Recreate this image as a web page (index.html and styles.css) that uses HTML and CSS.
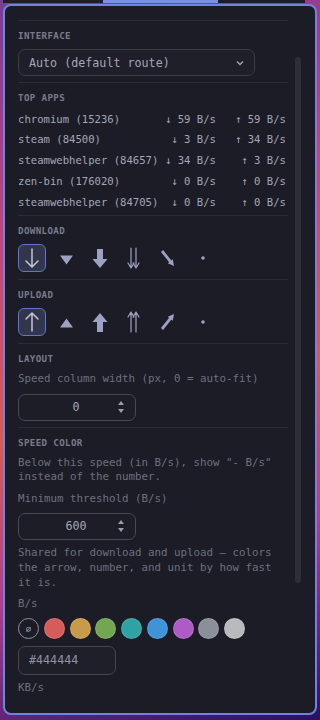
FILE: index.html
```html
<!DOCTYPE html>
<html lang="en">

<head>
	<meta charset="UTF-8">
	<meta name="viewport" content="width=device-width, initial-scale=1.0">
	<title>Net Speed Settings</title>
	<link rel="stylesheet" href="styles.css">
</head>

<body>
	<div class="topbar">
		<span class="tb-edge"></span>
		<span class="tb-dark tb-left"></span>
		<span class="tb-active"></span>
		<span class="tb-dark tb-right"></span>
	</div>

	<div class="panel">
		<div class="content">
			<div class="divider"></div>
			<section class="section">
				<h2 class="section-title">Interface</h2>
				<div class="select">
					<span>Auto (default route)</span>
					<svg class="chevron" viewBox="0 0 10 6"><path d="M2 1.5 L5 4.5 L8 1.5" /></svg>
				</div>
			</section>

			<div class="divider"></div>
			<section class="section section-apps">
				<h2 class="section-title">Top apps</h2>
				<div class="app-list">
					<span>chromium (15236)</span><span class="rate">↓ 59 B/s</span><span class="rate">↑ 59 B/s</span>
					<span>steam (84500)</span><span class="rate">↓ 3 B/s</span><span class="rate">↑ 34 B/s</span>
					<span>steamwebhelper (84657)</span><span class="rate">↓ 34 B/s</span><span class="rate">↑ 3 B/s</span>
					<span>zen-bin (176020)</span><span class="rate">↓ 0 B/s</span><span class="rate">↑ 0 B/s</span>
					<span>steamwebhelper (84705)</span><span class="rate">↓ 0 B/s</span><span class="rate">↑ 0 B/s</span>
				</div>
			</section>

			<div class="divider"></div>
			<section class="section section-icons">
				<h2 class="section-title">Download</h2>
				<div class="icon-row">
					<button class="icon-btn active"><svg viewBox="0 0 28 28"><path class="line" d="M14 5 V23 M8 17 L14 23 L20 17" /></svg></button>
					<button class="icon-btn"><svg viewBox="0 0 28 28"><polygon class="fill" points="8,11.5 21,11.5 14.5,20.5" /></svg></button>
					<button class="icon-btn"><svg viewBox="0 0 28 28"><path class="fill" d="M12 5 H18 V15 H22.5 L15 24 L7.5 15 H12 Z" /></svg></button>
					<button class="icon-btn"><svg viewBox="0 0 28 28"><path class="line thin" d="M12 4 V24 M17 4 V24 M9 19 L12 24 L15 19 M14 19 L17 24 L20 19" /></svg></button>
					<button class="icon-btn"><svg viewBox="0 0 28 28"><path class="line bold" d="M10 7 L18.5 17.6" /><polygon class="fill" points="22,22 15.75,19.3 20.75,15.3" /></svg></button>
					<button class="icon-btn"><svg viewBox="0 0 28 28"><circle class="fill" cx="17" cy="14" r="1.8" /></svg></button>
				</div>
			</section>

			<div class="divider"></div>
			<section class="section section-icons">
				<h2 class="section-title">Upload</h2>
				<div class="icon-row">
					<button class="icon-btn active"><svg viewBox="0 0 28 28"><path class="line" d="M14 23 V5 M8 11 L14 5 L20 11" /></svg></button>
					<button class="icon-btn"><svg viewBox="0 0 28 28"><polygon class="fill" points="8,19.5 21,19.5 14.5,10.5" /></svg></button>
					<button class="icon-btn"><svg viewBox="0 0 28 28"><path class="fill" d="M12 24 H18 V14 H22.5 L15 5 L7.5 14 H12 Z" /></svg></button>
					<button class="icon-btn"><svg viewBox="0 0 28 28"><path class="line thin" d="M12 24 V4 M17 24 V4 M9 9 L12 4 L15 9 M14 9 L17 4 L20 9" /></svg></button>
					<button class="icon-btn"><svg viewBox="0 0 28 28"><path class="line bold" d="M10 21 L18.5 10.4" /><polygon class="fill" points="22,6 15.75,8.7 20.75,12.7" /></svg></button>
					<button class="icon-btn"><svg viewBox="0 0 28 28"><circle class="fill" cx="17" cy="14" r="1.8" /></svg></button>
				</div>
			</section>

			<div class="divider"></div>
			<section class="section">
				<h2 class="section-title">Layout</h2>
				<p class="hint">Speed column width (px, 0 = auto-fit)</p>
				<div class="number-input">
					<span class="value">0</span>
					<span class="spinner"><svg viewBox="0 0 8 16"><polygon points="1,6 7,6 4,2" /><polygon points="1,10 7,10 4,14" /></svg></span>
				</div>
			</section>

			<div class="divider"></div>
			<section class="section">
				<h2 class="section-title">Speed color</h2>
				<p class="hint">Below this speed (in B/s), show "- B/s" instead of the number.</p>
				<p class="hint">Minimum threshold (B/s)</p>
				<div class="number-input">
					<span class="value">600</span>
					<span class="spinner"><svg viewBox="0 0 8 16"><polygon points="1,6 7,6 4,2" /><polygon points="1,10 7,10 4,14" /></svg></span>
				</div>
				<p class="hint">Shared for download and upload — colors the arrow, number, and unit by how fast it is.</p>
				<p class="hint">B/s</p>
				<div class="swatches">
					<span class="swatch none">⌀</span>
					<span class="swatch red"></span>
					<span class="swatch orange"></span>
					<span class="swatch green"></span>
					<span class="swatch teal"></span>
					<span class="swatch blue"></span>
					<span class="swatch purple"></span>
					<span class="swatch grey"></span>
					<span class="swatch silver"></span>
				</div>
				<div class="hex-input">#444444</div>
				<p class="hint">KB/s</p>
			</section>
		</div>

		<div class="scroll-gutter">
			<div class="scroll-thumb"></div>
		</div>
	</div>
</body>

</html>
```

FILE: styles.css
```css
* {
	margin: 0;
	padding: 0;
	box-sizing: border-box;
}

body {
	width: 320px;
	height: 720px;
	overflow: hidden;
	font-family: 'DejaVu Sans Mono', 'Liberation Mono', monospace;
	font-size: 10.8px;
	color: #a4a7b8;
	background: linear-gradient(165deg, #7b3a9a 0%, #c8437a 30%, #e0584f 55%, #b53c8c 75%, #3a1a70 96%, #2a1260 100%);
}

.topbar {
	display: flex;
	height: 3px;
}

.tb-edge {
	width: 3px;
}

.tb-dark {
	background: #1e1e29;
}

.tb-left {
	width: 100px;
}

.tb-active {
	width: 115px;
	background: #7b8fe3;
}

.tb-right {
	width: 87px;
}

.panel {
	display: flex;
	margin: 1px 3px 0;
	height: 711px;
	background: #1b1c25;
	border: 2px solid #6f84dc;
	border-radius: 8px;
	overflow: hidden;
}

.content {
	flex: 1;
	min-width: 0;
	padding: 14px 2px 0 13px;
}

.divider {
	height: 1px;
	margin-right: -2px;
	background: #292b36;
}

.section {
	display: flex;
	flex-direction: column;
	gap: 6.5px;
	padding: 8px 0 6px;
}

.section-title {
	font-size: 9.2px;
	line-height: 13px;
	font-weight: 700;
	letter-spacing: 0.35px;
	color: #787b8b;
	text-transform: uppercase;
	margin-bottom: 0.5px;
}

.select {
	display: flex;
	align-items: center;
	justify-content: space-between;
	width: 237px;
	height: 27px;
	padding: 0 9px 0 10px;
	border: 1px solid #3a3c49;
	border-radius: 7px;
	background: #1e1f29;
	font-size: 11.7px;
	color: #a4a7b8;
}

.chevron {
	width: 10px;
	height: 6px;
	fill: none;
	stroke: #a4a7b8;
	stroke-width: 1.3;
}

.section-apps {
	gap: 4px;
	padding-bottom: 3px;
}

.app-list {
	display: grid;
	grid-template-columns: 1fr auto 66px;
	column-gap: 4px;
	font-size: 10.6px;
	line-height: 20.75px;
	white-space: nowrap;
}

.rate {
	text-align: right;
	color: #a4a7b8;
}

.section-icons {
	padding-bottom: 7px;
}

.icon-row {
	display: flex;
	gap: 5.5px;
}

.icon-btn {
	width: 28px;
	height: 28px;
	border: 1.5px solid transparent;
	border-radius: 6px;
	background: transparent;
	display: flex;
	align-items: center;
	justify-content: center;
}

.icon-btn svg {
	width: 28px;
	height: 28px;
	flex: none;
}

.icon-btn .line {
	fill: none;
	stroke: #9da1c2;
	stroke-width: 1.5;
	stroke-linecap: round;
	stroke-linejoin: round;
}

.icon-btn .line.thin {
	stroke-width: 1.2;
}

.icon-btn .line.bold {
	stroke-width: 2.8;
	stroke-linecap: butt;
}

.icon-btn .fill {
	fill: #9da1c2;
}

.icon-btn.active {
	border-color: #5b79cc;
	background: #33364a;
}

.icon-btn.active .line {
	stroke: #c3c6da;
}

.hint {
	line-height: 14.75px;
	color: #6d707f;
}

.number-input {
	display: flex;
	align-items: center;
	width: 118px;
	height: 27px;
	border: 1px solid #474955;
	border-radius: 7px;
	background: #1c1d26;
	font-size: 11.7px;
	color: #a4a7b8;
}

.number-input .value {
	flex: 1;
	text-align: center;
	padding-left: 16px;
}

.spinner {
	width: 18px;
	display: flex;
	align-items: center;
}

.spinner svg {
	width: 8px;
	height: 16px;
	fill: #9a9dad;
}

.swatches {
	display: flex;
	gap: 4.75px;
}

.swatch {
	width: 21px;
	height: 21px;
	border-radius: 50%;
	border: 1px solid rgba(255, 255, 255, 0.12);
}

.swatch.none {
	display: flex;
	align-items: center;
	justify-content: center;
	border-color: #8e91a0;
	font-size: 9px;
	color: #a4a7b8;
}

.red { background: #d65c5c; }
.orange { background: #c99a4a; }
.green { background: #72a650; }
.teal { background: #2fa3a3; }
.blue { background: #3f93d9; }
.purple { background: #ad5cc6; }
.grey { background: #8b8f99; }
.silver { background: #b8babd; }

.hex-input {
	display: flex;
	align-items: center;
	width: 98px;
	height: 29px;
	padding-left: 10px;
	border: 1px solid #45474f;
	border-radius: 7px;
	background: #1e1f28;
	font-size: 11.7px;
	color: #8e91a0;
}

.scroll-gutter {
	width: 27px;
	flex: none;
	padding: 51px 0 0 7px;
}

.scroll-thumb {
	width: 6px;
	height: 526px;
	border-radius: 3px;
	background: #2d2e37;
}
```
